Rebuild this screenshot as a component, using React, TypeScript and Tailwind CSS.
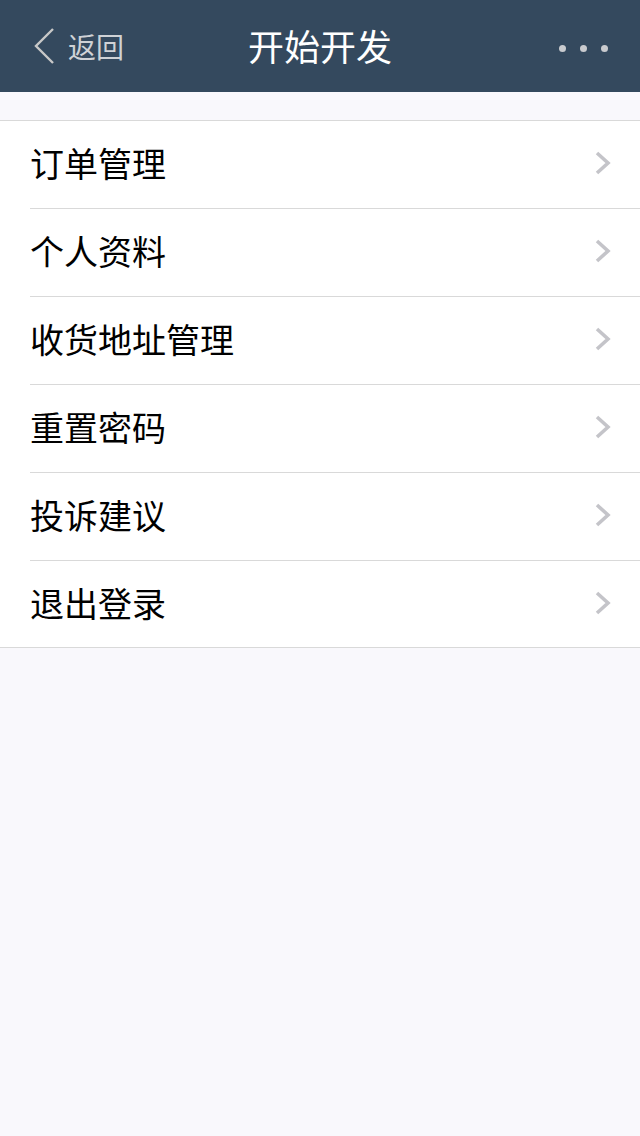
const ITEMS = ['订单管理', '个人资料', '收货地址管理', '重置密码', '投诉建议', '退出登录']

function Chevron() {
  return (
    <svg width="16" height="24" viewBox="0 0 16 24" className="ml-auto">
      <path d="M2 2 L13 12 L2 22" fill="none" stroke="#c4c4c9" strokeWidth="3.6" />
    </svg>
  )
}

export default function App() {
  return (
    <div
      className="min-h-[1136px] w-[640px] bg-[#f9f8fc]"
      style={{ fontFamily: '"Noto Sans CJK SC", "Noto Sans", sans-serif' }}
    >
      {/* 顶部导航 */}
      <header className="relative flex h-[92px] items-center bg-[#34495e]">
        <div className="flex items-center pl-[33px]">
          <svg width="24" height="38" viewBox="0 0 24 38" className="mr-[11px]">
            <path d="M20 2 L3 19 L20 36" fill="none" stroke="#c8c8c8" strokeWidth="2.4" />
          </svg>
          <span className="text-[28px] leading-none text-[#cfd2d6]">返回</span>
        </div>
        <h1 className="absolute left-1/2 top-[21px] -translate-x-1/2 text-[36px] leading-[48px] text-white">
          开始开发
        </h1>
        <div className="ml-auto flex gap-[14px] pr-[32px] pt-[4px]">
          <span className="h-[7px] w-[7px] rounded-full bg-[#c9cbcf]" />
          <span className="h-[7px] w-[7px] rounded-full bg-[#c9cbcf]" />
          <span className="h-[7px] w-[7px] rounded-full bg-[#c9cbcf]" />
        </div>
      </header>

      {/* 菜单列表 */}
      <ul className="mt-[28px] border-y border-[#d9d9d9] bg-white">
        {ITEMS.map((item, i) => (
          <li key={item} className="pl-[30px]">
            <div
              className={`flex items-center pr-[29px] pb-[3px] ${
                i < ITEMS.length - 1 ? 'h-[88px] border-b border-[#d9d9d9]' : 'h-[86px]'
              }`}
            >
              <span className="text-[34px] leading-none text-black">{item}</span>
              <Chevron />
            </div>
          </li>
        ))}
      </ul>
    </div>
  )
}
